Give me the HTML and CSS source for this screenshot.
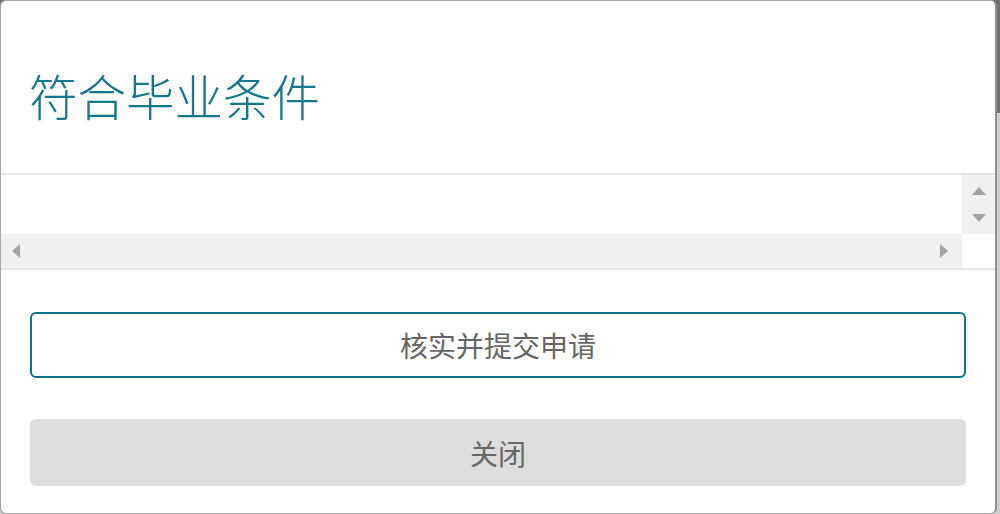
FILE: index.html
```html
<!DOCTYPE html>
<html lang="zh-CN">
<head>
<meta charset="utf-8">
<title>符合毕业条件</title>
<link rel="stylesheet" href="styles.css">
</head>
<body>
  <div class="dialog">
    <div class="dialog-header">
      <h1 class="dialog-title">符合毕业条件</h1>
    </div>
    <div class="scroll-area">
      <div class="scroll-body"></div>
      <div class="vbar">
        <span class="arrow arrow-up"></span>
        <span class="arrow arrow-down"></span>
      </div>
      <div class="hbar">
        <span class="arrow arrow-left"></span>
        <span class="arrow arrow-right"></span>
      </div>
      <div class="corner"></div>
    </div>
    <div class="dialog-footer">
      <button class="btn btn-submit" type="button">核实并提交申请</button>
      <button class="btn btn-close" type="button">关闭</button>
    </div>
  </div>
</body>
</html>
```

FILE: styles.css
```css
html, body {
  margin: 0;
  padding: 0;
  height: 100%;
  overflow: hidden;
}

body {
  background: linear-gradient(to bottom, #707070 0, #707070 113px, #cfcfcf 113px, #cfcfcf 100%);
  font-family: "Noto Sans CJK SC", "Noto Sans", sans-serif;
}

.dialog {
  box-sizing: border-box;
  width: 997px;
  height: 514px;
  background: #ffffff;
  border: 1px solid #a6a6a6;
  border-right: 2px solid #8f8f8f;
  border-radius: 6px;
  display: flex;
  flex-direction: column;
  overflow: hidden;
}

.dialog-header {
  height: 174px;
  box-sizing: border-box;
  padding: 70px 0 0 28px;
  border-bottom: 2px solid #e5e5e5;
}

.dialog-title {
  margin: 0;
  font-size: 48.5px;
  line-height: 49px;
  font-weight: 300;
  color: #16798b;
  letter-spacing: 0;
}

.scroll-area {
  display: grid;
  grid-template-columns: 1fr 33px;
  grid-template-rows: 59px 34px;
  border-bottom: 2px solid #e5e5e5;
}

.scroll-body {
  background: #ffffff;
}

.vbar {
  background: #f0f0f0;
  display: flex;
  flex-direction: column;
  align-items: center;
  justify-content: space-between;
  padding: 12px 0;
}

.hbar {
  background: #f0f0f0;
  display: flex;
  align-items: center;
  justify-content: space-between;
  padding: 0 14px 0 11px;
}

.corner {
  background: #ffffff;
}

.arrow {
  display: block;
  width: 0;
  height: 0;
}

.arrow-up {
  border-left: 7px solid transparent;
  border-right: 7px solid transparent;
  border-bottom: 8px solid #a3a3a3;
}

.arrow-down {
  border-left: 7px solid transparent;
  border-right: 7px solid transparent;
  border-top: 8px solid #a3a3a3;
}

.arrow-left {
  border-top: 7px solid transparent;
  border-bottom: 7px solid transparent;
  border-right: 8px solid #a3a3a3;
}

.arrow-right {
  border-top: 7px solid transparent;
  border-bottom: 7px solid transparent;
  border-left: 8px solid #a3a3a3;
}

.dialog-footer {
  display: flex;
  flex-direction: column;
  gap: 41px;
  padding: 42px 29px 0 29px;
}

.btn {
  display: flex;
  align-items: center;
  justify-content: center;
  width: 100%;
  margin: 0;
  box-sizing: border-box;
  font-family: "Noto Sans CJK SC", "Noto Sans", sans-serif;
  font-size: 28px;
  font-weight: 400;
  color: #666666;
  border-radius: 6px;
  cursor: pointer;
  padding: 0;
  flex: none;
}

.btn-submit {
  height: 66px;
  background: #ffffff;
  border: 2px solid #0f7489;
}

.btn-close {
  height: 67px;
  background: #dddddd;
  border: none;
}
```
